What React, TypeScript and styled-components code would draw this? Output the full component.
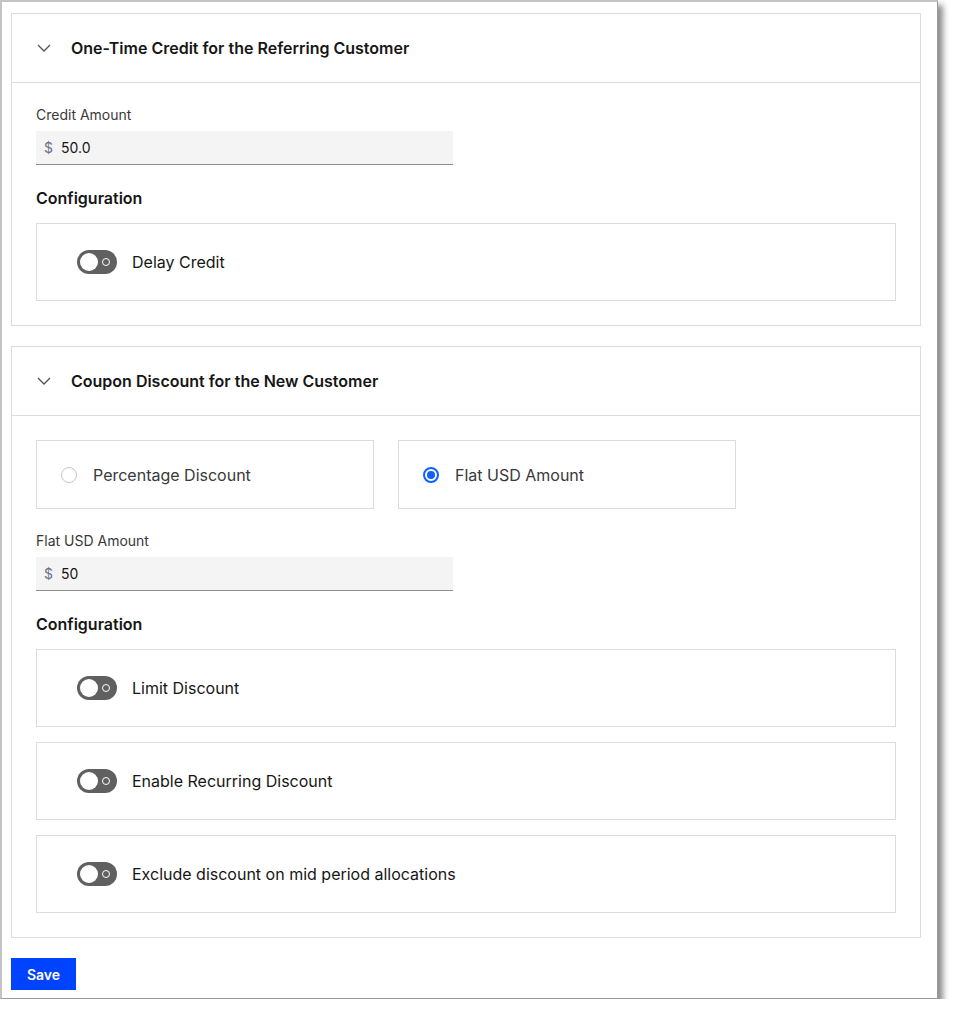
import React from 'react';
import styled, { createGlobalStyle } from 'styled-components';

const GlobalStyle = createGlobalStyle`
  html, body { margin: 0; padding: 0; background: #ffffff; }
  body { font-family: Inter, "Noto Sans", Arial, sans-serif; color: #161616; }
  * { box-sizing: border-box; }
`;

const Frame = styled.div`
  width: 938px;
  height: 999px;
  background: #ffffff;
  border-top: 2px solid #c4c4c4;
  border-left: 2px solid #c4c4c4;
  border-right: 1px solid #9a9a9a;
  border-bottom: 1px solid #9a9a9a;
  box-shadow: 5px 5px 6px rgba(0, 0, 0, 0.45);
  padding: 11px 0 0 9px;
  display: flex;
  flex-direction: column;
`;

const Panel = styled.section`
  width: 910px;
  border: 1px solid #dcdcdc;
  & + & { margin-top: 20px; }
`;

const PanelHeader = styled.div`
  height: 69px;
  display: flex;
  align-items: center;
  padding-left: 25px;
  border-bottom: 1px solid #dcdcdc;
`;

const Chevron = styled.svg`
  width: 14px;
  height: 8px;
  margin-right: 20px;
  flex-shrink: 0;
`;

const PanelTitle = styled.h2`
  margin: 0;
  font-size: 16px;
  font-weight: 600;
  line-height: 20px;
  color: #161616;
`;

const PanelBody = styled.div`
  padding: 24px;
  display: flex;
  flex-direction: column;
`;

const FieldLabel = styled.label`
  font-size: 14px;
  line-height: 16px;
  color: #393939;
  margin-bottom: 8px;
`;

const InputWrap = styled.div`
  width: 417px;
  height: 34px;
  background: #f4f4f4;
  border-bottom: 1px solid #8d8d8d;
  display: flex;
  align-items: center;
  padding-left: 8px;
  font-size: 14px;
`;

const Prefix = styled.span`
  color: #6f6f8c;
  margin-right: 8px;
`;

const Value = styled.span`
  color: #161616;
`;

const SectionHeading = styled.h3`
  margin: 23px 0 15px;
  font-size: 16px;
  font-weight: 600;
  line-height: 20px;
  color: #161616;
`;

const ConfigList = styled.div`
  display: flex;
  flex-direction: column;
  gap: 15px;
`;

const ConfigBox = styled.div`
  width: 860px;
  height: 78px;
  border: 1px solid #dcdcdc;
  display: flex;
  align-items: center;
  padding-left: 40px;
`;

const Toggle = styled.span`
  position: relative;
  width: 40px;
  height: 24px;
  border-radius: 12px;
  background: #606060;
  margin-right: 15px;
  flex-shrink: 0;
  &::before {
    content: '';
    position: absolute;
    left: 3px;
    top: 3px;
    width: 18px;
    height: 18px;
    border-radius: 50%;
    background: #ffffff;
  }
  &::after {
    content: '';
    position: absolute;
    right: 7px;
    top: 8px;
    width: 6px;
    height: 6px;
    border-radius: 50%;
    border: 1px solid #ffffff;
  }
`;

const OptionText = styled.span`
  font-size: 16px;
  line-height: 20px;
  color: #161616;
`;

const RadioRow = styled.div`
  display: flex;
  gap: 24px;
  margin-bottom: 24px;
`;

const RadioCard = styled.div`
  width: 338px;
  height: 69px;
  border: 1px solid #dcdcdc;
  display: flex;
  align-items: center;
  padding-left: 24px;
`;

const Radio = styled.span<{ $checked?: boolean }>`
  width: 16px;
  height: 16px;
  border-radius: 50%;
  border: ${p => (p.$checked ? '2px solid #0f62fe' : '1px solid #c6c6c6')};
  margin-right: 16px;
  flex-shrink: 0;
  display: flex;
  align-items: center;
  justify-content: center;
  &::after {
    content: '';
    display: ${p => (p.$checked ? 'block' : 'none')};
    width: 8px;
    height: 8px;
    border-radius: 50%;
    background: #0f62fe;
  }
`;

const RadioText = styled.span`
  font-size: 16px;
  line-height: 20px;
  color: #393939;
`;

const SaveButton = styled.button`
  margin-top: 20px;
  width: 65px;
  height: 32px;
  border: none;
  background: #0043ff;
  color: #ffffff;
  font-family: Inter, Arial, sans-serif;
  font-size: 14px;
  font-weight: 600;
  padding: 0;
  cursor: pointer;
`;

function ChevronDown() {
  return (
    <Chevron viewBox="0 0 14 8">
      <path d="M1 1 L7 7 L13 1" fill="none" stroke="#525252" strokeWidth="1.3" />
    </Chevron>
  );
}

function ToggleOption({ label }: { label: string }) {
  return (
    <ConfigBox>
      <Toggle />
      <OptionText>{label}</OptionText>
    </ConfigBox>
  );
}

export default function App() {
  return (
    <>
      <GlobalStyle />
      <Frame>
        <Panel>
          <PanelHeader>
            <ChevronDown />
            <PanelTitle>One-Time Credit for the Referring Customer</PanelTitle>
          </PanelHeader>
          <PanelBody>
            <FieldLabel>Credit Amount</FieldLabel>
            <InputWrap>
              <Prefix>$</Prefix>
              <Value>50.0</Value>
            </InputWrap>
            <SectionHeading>Configuration</SectionHeading>
            <ConfigList>
              <ToggleOption label="Delay Credit" />
            </ConfigList>
          </PanelBody>
        </Panel>
        <Panel>
          <PanelHeader>
            <ChevronDown />
            <PanelTitle>Coupon Discount for the New Customer</PanelTitle>
          </PanelHeader>
          <PanelBody>
            <RadioRow>
              <RadioCard>
                <Radio />
                <RadioText>Percentage Discount</RadioText>
              </RadioCard>
              <RadioCard>
                <Radio $checked />
                <RadioText>Flat USD Amount</RadioText>
              </RadioCard>
            </RadioRow>
            <FieldLabel>Flat USD Amount</FieldLabel>
            <InputWrap>
              <Prefix>$</Prefix>
              <Value>50</Value>
            </InputWrap>
            <SectionHeading>Configuration</SectionHeading>
            <ConfigList>
              <ToggleOption label="Limit Discount" />
              <ToggleOption label="Enable Recurring Discount" />
              <ToggleOption label="Exclude discount on mid period allocations" />
            </ConfigList>
          </PanelBody>
        </Panel>
        <SaveButton>Save</SaveButton>
      </Frame>
    </>
  );
}
